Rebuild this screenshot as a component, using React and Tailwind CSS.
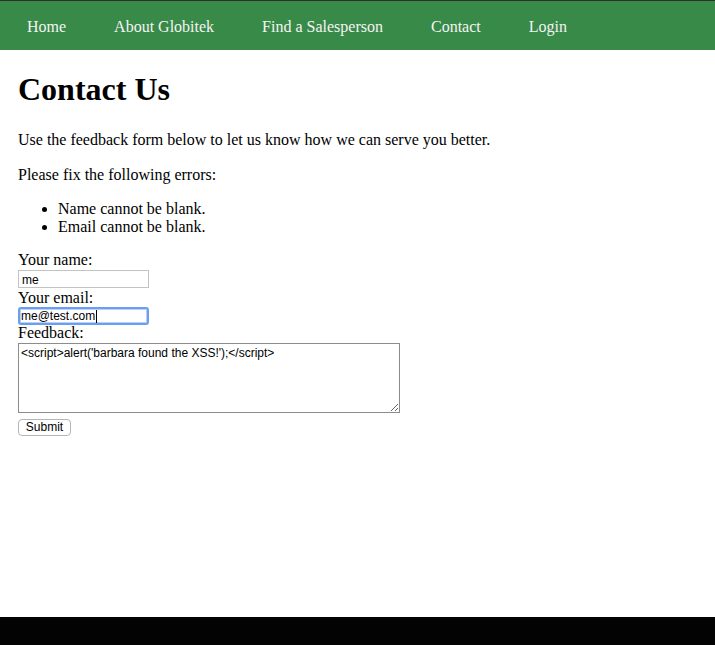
export default function App() {
  const serif = { fontFamily: '"Liberation Serif", "Times New Roman", serif' };
  const sans = { fontFamily: '"Liberation Sans", Arial, sans-serif' };
  const navItems = ["Home", "About Globitek", "Find a Salesperson", "Contact", "Login"];
  return (
    <div className="flex h-screen flex-col bg-white text-black" style={serif}>
      <nav className="flex h-[50px] shrink-0 items-center border-t border-[#2e2e2e] bg-[#388a48] pl-[3px]">
        <ul className="flex">
          {navItems.map((t) => (
            <li key={t} className="px-6 pt-[2px] text-[16px] leading-[18px] text-[#f4f4f4]">
              {t}
            </li>
          ))}
        </ul>
      </nav>
      <main className="flex-1 px-[18px]">
        <h1 className="mt-[21px] text-[32px] font-bold leading-[37px]">Contact Us</h1>
        <p className="mt-[23px] text-[16px] leading-[18px]">
          Use the feedback form below to let us know how we can serve you better.
        </p>
        <p className="mt-[17px] text-[16px] leading-[18px]">Please fix the following errors:</p>
        <ul className="mt-[16px] list-disc pl-[40px] text-[16px] leading-[18px]">
          <li>Name cannot be blank.</li>
          <li>Email cannot be blank.</li>
        </ul>
        <form className="mt-[16px] flex flex-col items-start text-[16px]">
          <label className="block h-[18px] leading-[16px]">Your name:</label>
          <input
            readOnly
            value="me"
            className="block h-[18px] w-[131px] border border-[#c3c3c3] bg-white px-[3px] pt-[1px] text-[12px] leading-[16px] outline-none"
            style={sans}
          />
          <label className="block h-[19px] leading-[19px]">Your email:</label>
          <div className="relative h-[18px]">
            <input
              readOnly
              value="me@test.com"
              className="block h-[18px] w-[131px] rounded-[3px] border-2 border-[#6b9ef0] bg-white px-[1px] text-[12px] leading-[14px] shadow-[inset_0_0_0_1px_#b9d1f8] outline-none"
              style={sans}
            />
            <span className="absolute left-[78px] top-[3px] h-[13px] w-px bg-black" />
          </div>
          <label className="block h-[18px] leading-[15px]">Feedback:</label>
          <textarea
            readOnly
            value="<script>alert('barbara found the XSS!');</script>"
            className="block h-[70px] w-[382px] resize-y border border-[#8c8c8c] bg-white px-[2px] py-[2px] text-[12px] leading-[14px] outline-none"
            style={sans}
          />
          <button
            type="button"
            className="mt-[6px] h-[17px] w-[53px] rounded-[4px] border border-[#b5b5b5] bg-white text-[12px] leading-[15px] text-black"
            style={sans}
          >
            Submit
          </button>
        </form>
      </main>
      <footer className="h-[28px] shrink-0 bg-[#030303]" />
    </div>
  );
}
